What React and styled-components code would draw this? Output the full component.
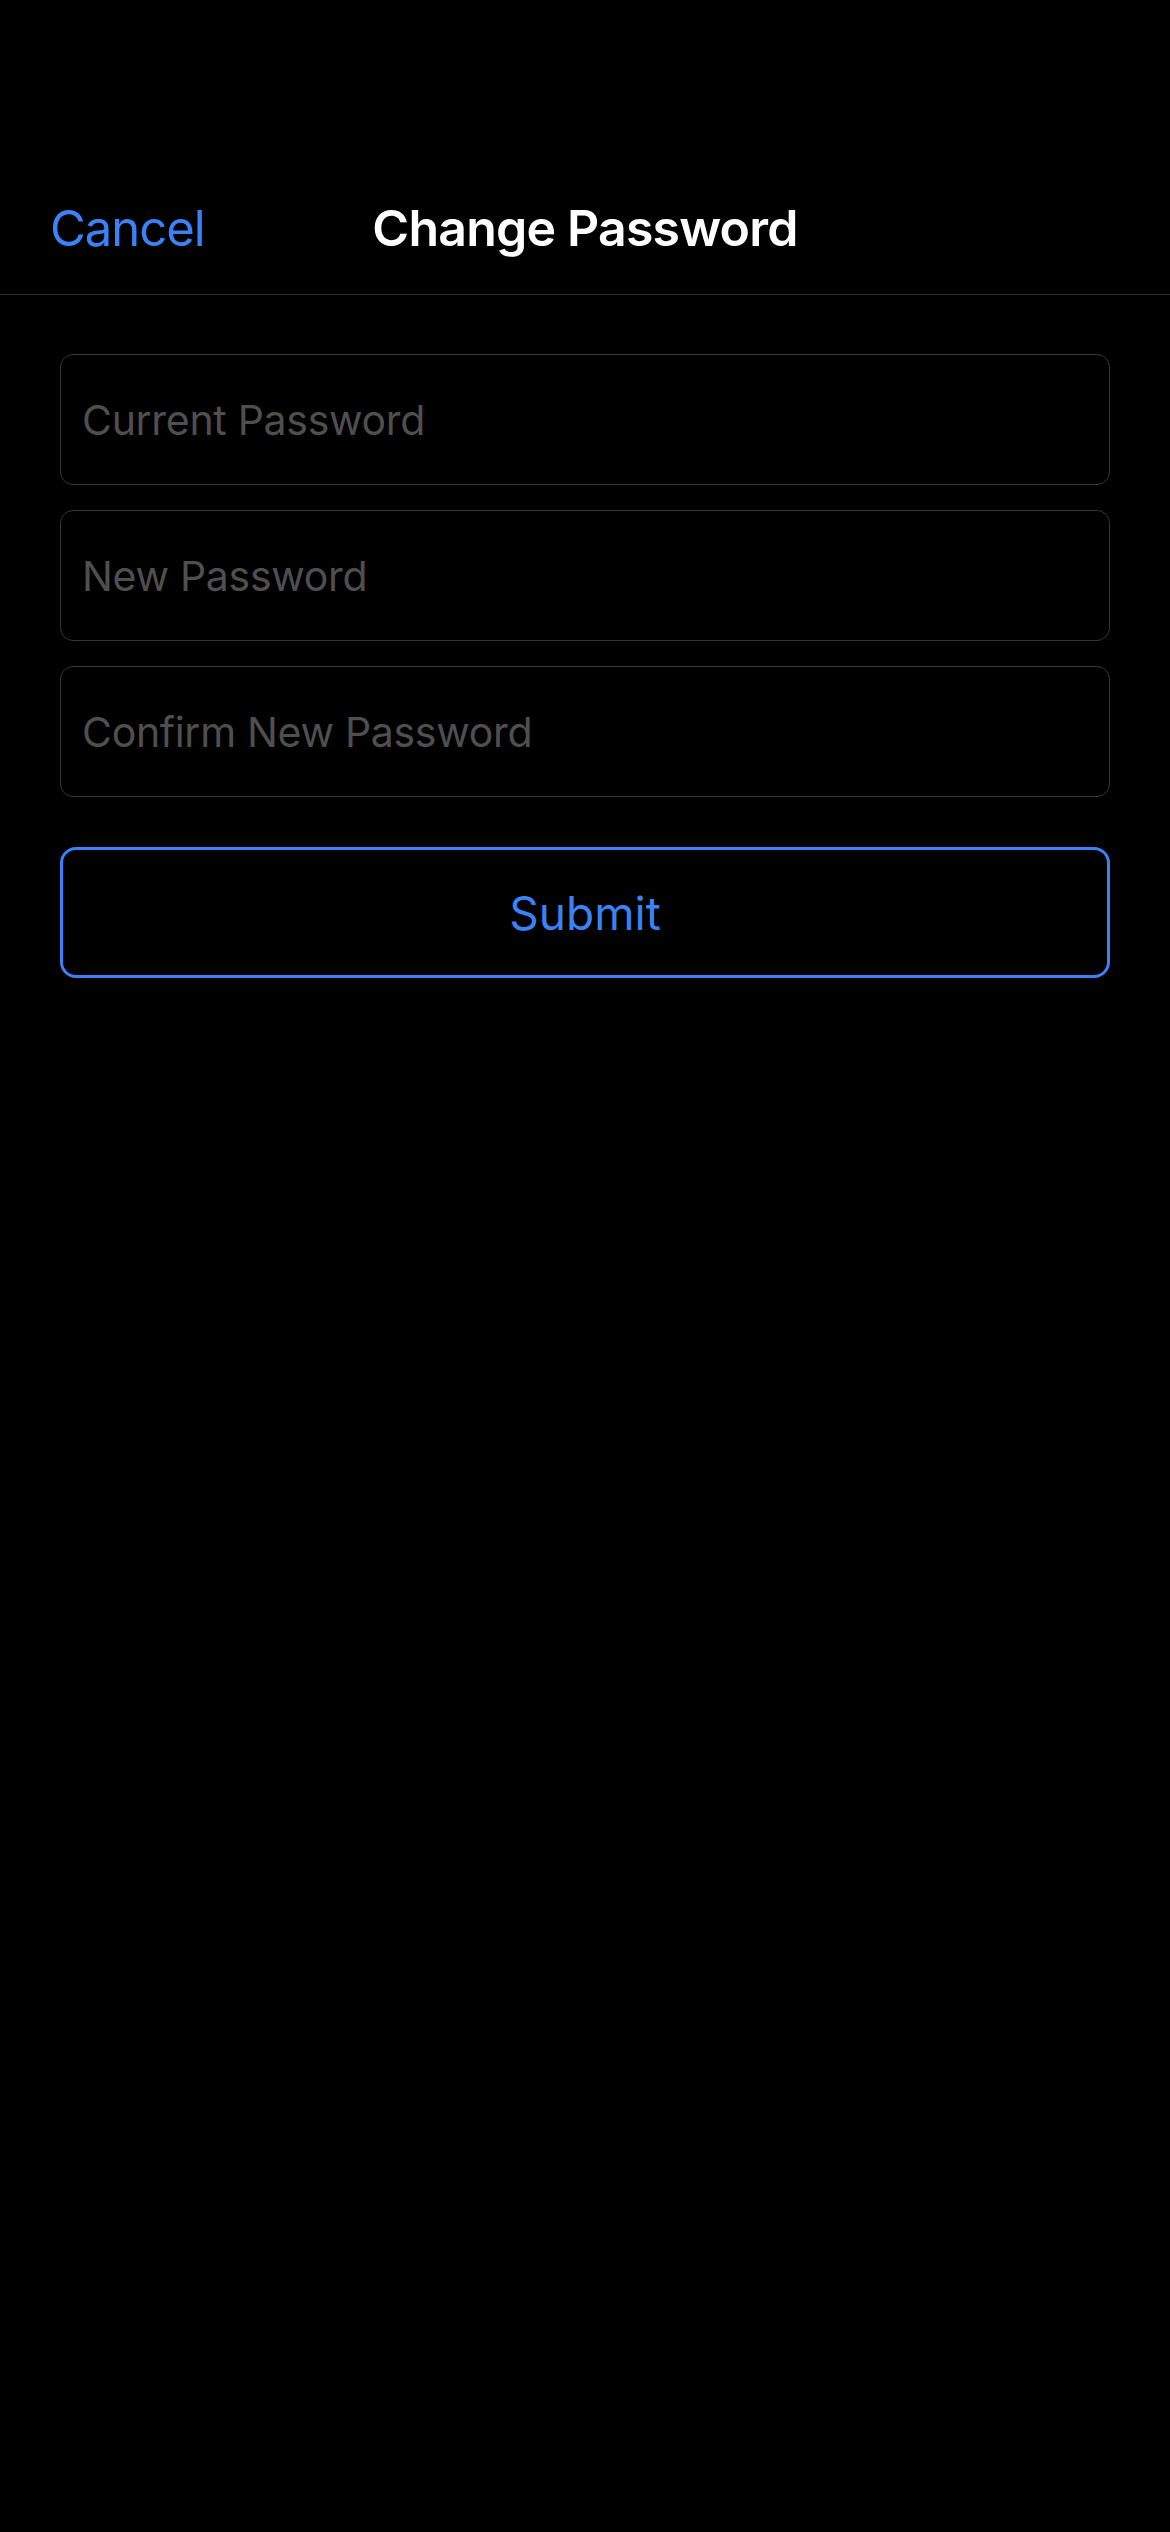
import styled, { createGlobalStyle } from 'styled-components';

const GlobalStyle = createGlobalStyle`
  html, body {
    margin: 0;
    padding: 0;
    background: #000;
  }
  body {
    font-family: Inter, "Noto Sans", "Liberation Sans", sans-serif;
    -webkit-font-smoothing: antialiased;
  }
`

const colors = {
  blue: '#3b82f6',
  border: '#363636',
  placeholder: '#4f4f4f',
  divider: '#2e2e2e',
}

function App(){
    return(
        <Screen>
            <GlobalStyle/>
            <StatusSpace/>
            <NavBar>
                <CancelButton type="button">Cancel</CancelButton>
                <NavTitle>Change Password</NavTitle>
                <NavSide/>
            </NavBar>
            <Form onSubmit={(e)=>e.preventDefault()}>
                <Field type="password" placeholder="Current Password"/>
                <Field type="password" placeholder="New Password"/>
                <Field type="password" placeholder="Confirm New Password"/>
                <SubmitButton type="submit">Submit</SubmitButton>
            </Form>
        </Screen>
    )
}

export default App

const Screen = styled.div`
  width: 1170px;
  min-height: 2532px;
  background: #000;
  display: flex;
  flex-direction: column;
`
const StatusSpace = styled.div`
  height: 162px;
`
const NavBar = styled.div`
  height: 133px;
  display: grid;
  grid-template-columns: 1fr auto 1fr;
  align-items: center;
  padding: 0 50px;
  border-bottom: 1.5px solid ${colors.divider};
  box-sizing: border-box;
`
const CancelButton = styled.button`
  justify-self: start;
  background: none;
  border: none;
  padding: 0;
  font-family: inherit;
  font-size: 49px;
  letter-spacing: -1px;
  color: ${colors.blue};
  cursor: pointer;
`
const NavTitle = styled.h1`
  margin: 0;
  font-size: 50px;
  font-weight: 600;
  letter-spacing: -0.8px;
  color: #fff;
`
const NavSide = styled.div``
const Form = styled.form`
  display: flex;
  flex-direction: column;
  gap: 25px;
  padding: 59px 60px 0;
`
const Field = styled.input`
  height: 131px;
  box-sizing: border-box;
  background: #000;
  border: 1.5px solid ${colors.border};
  border-radius: 13px;
  padding: 0 21px;
  font-family: inherit;
  font-size: 41px;
  letter-spacing: -0.3px;
  color: #fff;
  outline: none;
  &::placeholder{
    color: ${colors.placeholder};
  }
`
const SubmitButton = styled.button`
  margin-top: 25px;
  height: 131px;
  box-sizing: border-box;
  background: transparent;
  border: 3px solid ${colors.blue};
  border-radius: 16px;
  font-family: inherit;
  font-size: 46px;
  letter-spacing: 0;
  color: ${colors.blue};
  cursor: pointer;
`
